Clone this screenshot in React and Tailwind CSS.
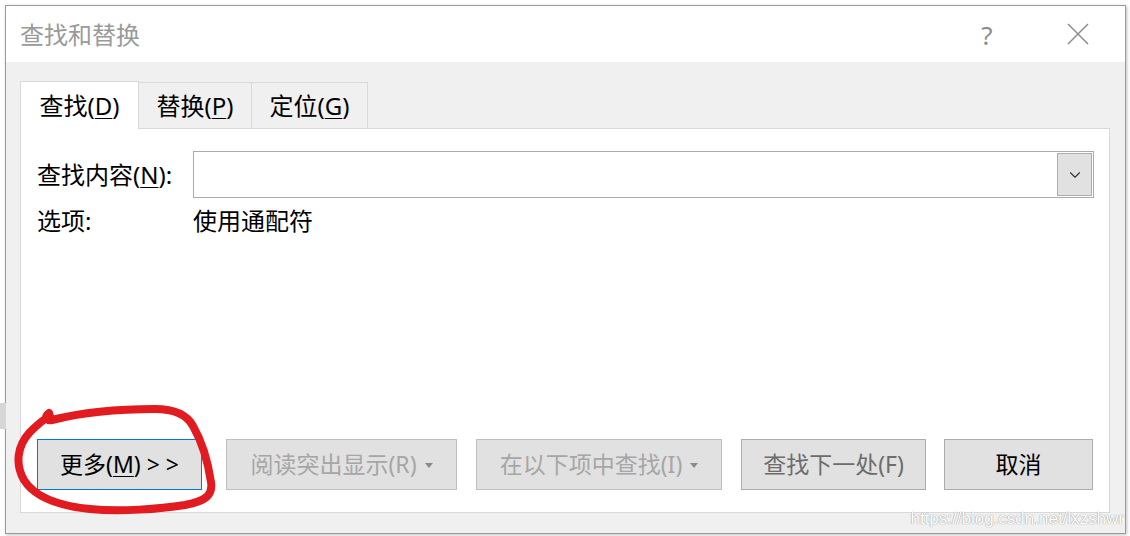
import { ChevronDown } from "lucide-react";

const FONT = "font-['Noto_Sans','Noto_Sans_CJK_SC',sans-serif]";

function U({ children }) {
  return <span className="underline underline-offset-[3px] decoration-1">{children}</span>;
}

function Btn({ children, w, tone = "normal", caret }) {
  const tones = {
    focus: "border-[#0078d7] text-black",
    normal: "border-[#adadad] text-black",
    muted: "border-[#adadad] text-[#6d6d6d]",
    disabled: "border-[#bfbfbf] text-[#a6a6a6]",
  };
  return (
    <button
      className={`h-[51px] ${w} shrink-0 flex items-center justify-center gap-[8px] border bg-[#e1e1e1] text-[23px] ${tones[tone]}`}
    >
      <span>{children}</span>
      {caret && (
        <svg width="8" height="5" viewBox="0 0 8 5" className="mt-[1px]">
          <path d="M0 0 L8 0 L4 5 Z" fill="#8a8a8a" />
        </svg>
      )}
    </button>
  );
}

export default function App() {
  return (
    <div className={`relative w-[1130px] h-[536px] bg-white overflow-hidden ${FONT}`}>
      {/* background strip behind the dialog */}
      <div className="absolute left-0 top-[403px] w-[6px] h-[26px] bg-[#d6d6d6]" />

      <div className="ml-[5px] mt-[5px] w-[1121px] h-[529px] border border-[#9b9b9b] bg-white flex flex-col shadow-[1px_1px_3px_rgba(0,0,0,0.25)]">
        {/* title bar */}
        <div className="h-[56px] flex items-center pl-[14px] pr-[25px]">
          <div className="text-[24px] text-[#9a9a9a] flex-1 pt-[2px]">查找和替换</div>
          <div className="w-[46px] text-center text-[26px] text-[#8c8c8c] pt-[2px]">?</div>
          <div className="w-[45px] ml-[45px] flex items-center justify-center">
            <svg width="22" height="22" viewBox="0 0 22 22">
              <path d="M1 1 L21 21 M21 1 L1 21" stroke="#8c8c8c" strokeWidth="1.5" fill="none" />
            </svg>
          </div>
        </div>

        {/* body */}
        <div className="flex-1 bg-[#f0f0f0] pl-[14px] pr-[15px] pt-[18px] pb-[20px] flex flex-col">
          <div className="flex items-end h-[48px]">
            <div className="relative z-10 -mb-px h-[48px] w-[119px] bg-white border border-b-0 border-[#d9d9d9] flex items-center justify-center text-[24px] text-black">
              查找(<U>D</U>)
            </div>
            <div className="h-[46px] w-[113px] border-t border-r border-[#d9d9d9] flex items-center justify-center text-[24px] text-black">
              替换(<U>P</U>)
            </div>
            <div className="h-[46px] w-[116px] border-t border-r border-[#d9d9d9] flex items-center justify-center text-[24px] text-black">
              定位(<U>G</U>)
            </div>
          </div>

          <div className="flex-1 bg-white border border-[#d9d9d9] pl-[16px] pr-[15px] pt-[22px] pb-[22px] flex flex-col">
            <div className="flex items-center h-[47px]">
              <div className="w-[156px] text-[24px] text-black">
                查找内容(<U>N</U>):
              </div>
              <div className="flex-1 h-[47px] border border-[#ababab] flex justify-end p-[1px]">
                <div className="w-[35px] h-full bg-[#e1e1e1] border border-[#adadad] flex items-center justify-center">
                  <ChevronDown size={18} strokeWidth={1.5} className="text-[#333]" />
                </div>
              </div>
            </div>
            <div className="flex items-center h-[26px] mt-[10px] text-[24px] text-black">
              <div className="w-[156px]">选项:</div>
              <div>使用通配符</div>
            </div>

            <div className="mt-auto flex items-center">
              <Btn w="w-[165px]" tone="focus">
                更多(<U>M</U>) &gt; &gt;
              </Btn>
              <div className="w-[24px]" />
              <Btn w="w-[231px]" tone="disabled" caret>
                阅读突出显示(R)
              </Btn>
              <div className="w-[19px]" />
              <Btn w="w-[246px]" tone="disabled" caret>
                在以下项中查找(I)
              </Btn>
              <div className="w-[19px]" />
              <Btn w="w-[185px]" tone="muted">
                查找下一处(F)
              </Btn>
              <div className="w-[18px]" />
              <Btn w="w-[149px]" tone="normal">
                取消
              </Btn>
            </div>
          </div>
        </div>
      </div>

      {/* red hand-drawn annotation */}
      <svg className="absolute left-0 top-0 pointer-events-none" width="1130" height="536">
        <path
          d="M49 413 C44 417 46 421 52 420 C80 413 120 409 155 409 C172 409 186 413 193 426 C201 440 208 462 211 482 C213 495 206 501 185 505 C160 509 120 512 90 509 C60 506 35 498 24 480 C15 464 17 446 30 432 C37 425 44 419 50 416"
          stroke="#e11b1f"
          strokeWidth="8"
          fill="none"
          strokeLinecap="round"
          strokeLinejoin="round"
        />
      </svg>

      {/* watermark */}
      <div className="absolute right-[6px] top-[506px] font-['Liberation_Sans',sans-serif] text-[17px] text-white [text-shadow:0_0_1px_#9a9a9a,0_0_1px_#9a9a9a]">
        https://blog.csdn.net/lxzshwr
      </div>
    </div>
  );
}
